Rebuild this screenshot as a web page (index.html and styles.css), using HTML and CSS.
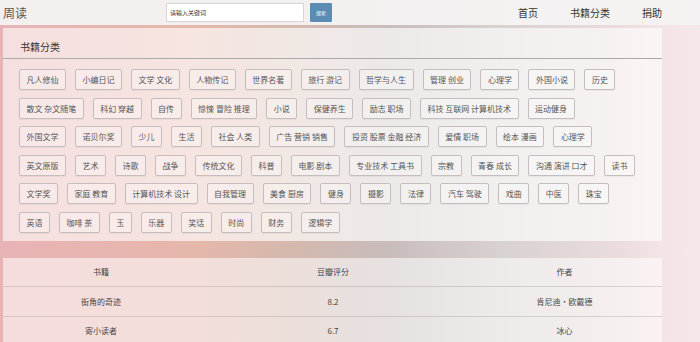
FILE: index.html
```html
<!DOCTYPE html>
<html lang="zh-CN">
<head>
  <meta charset="UTF-8" />
  <title>周读</title>
  <link rel="stylesheet" href="styles.css">
</head>
<body>

<nav class="navbar">
  <div class="nav-inner">
    <a class="brand" href="#">周读</a>
    <form class="search" onsubmit="return false">
      <input type="text" placeholder="请输入关键词" />
      <button type="submit">搜索</button>
    </form>
    <ul class="nav-links">
      <li><a href="#">首页</a></li>
      <li><a href="#">书籍分类</a></li>
      <li><a href="#">捐助</a></li>
    </ul>
  </div>
</nav>

<main class="wrap">
  <section class="panel">
    <div class="panel-title">书籍分类</div>
    <div class="tags" id="tags"></div>
  </section>

  <table class="books">
    <thead>
      <tr><th class="c1">书籍</th><th class="c2">豆瓣评分</th><th class="c3">作者</th></tr>
    </thead>
    <tbody>
      <tr><td>街角的奇迹</td><td>8.2</td><td>肯尼迪·欧戴德</td></tr>
      <tr><td>寄小读者</td><td>6.7</td><td>冰心</td></tr>
    </tbody>
  </table>
</main>

<script>
  const rows = [
    ["凡人修仙", "小编日记", "文学 文化", "人物传记", "世界名著", "旅行 游记", "哲学与人生", "管理 创业", "心理学", "外国小说", "历史"],
    ["散文 杂文随笔", "科幻 穿越", "自传", "惊悚 冒险 推理", "小说", "保健养生", "励志 职场", "科技 互联网 计算机技术", "运动健身"],
    ["外国文学", "诺贝尔奖", "少儿", "生活", "社会 人类", "广告 营销 销售", "投资 股票 金融 经济", "爱情 职场", "绘本 漫画", "心理学"],
    ["英文原版", "艺术", "诗歌", "战争", "传统文化", "科普", "电影 剧本", "专业技术 工具书", "宗教", "青春 成长", "沟通 演讲 口才", "读书"],
    ["文学奖", "家庭 教育", "计算机技术 设计", "自我管理", "美食 厨房", "健身", "摄影", "法律", "汽车 驾驶", "戏曲", "中医", "珠宝"],
    ["英语", "咖啡 茶", "玉", "乐器", "笑话", "时尚", "财务", "逻辑学"]
  ];

  const box = document.getElementById("tags");
  rows.forEach(row => {
    const line = document.createElement("div");
    line.className = "tag-row";
    row.forEach(name => {
      const a = document.createElement("a");
      a.className = "tag";
      a.href = "#";
      a.textContent = name;
      line.appendChild(a);
    });
    box.appendChild(line);
  });
</script>

</body>
</html>
```

FILE: styles.css
```css
body {
  margin: 0;
  font-family: "Noto Sans CJK SC", "Noto Sans", sans-serif;
  color: #444;
  min-height: 100vh;
  background:
    linear-gradient(90deg, #e8b3b5 0%, #e6b7ab 28%, #d6b8ac 40%, #c8bcbb 55%, #d8d2d1 72%, #eadcdc 88%, #f5e4e6 95%, #f6e8ea 100%);
}

a {
  color: inherit;
  text-decoration: none;
}

.navbar {
  height: 25px;
  background: rgba(245, 243, 243, 0.96);
}

.nav-inner {
  width: 659px;
  margin-left: 3px;
  height: 25px;
  display: flex;
  align-items: center;
}

.brand {
  font-size: 12px;
  color: #555;
  width: 24px;
}

.search {
  display: flex;
  align-items: center;
  margin-left: 139px;
}

.search input {
  width: 138px;
  height: 19px;
  box-sizing: border-box;
  border: 1px solid #d6d6d6;
  background: #fff;
  padding: 0 3px;
  font-size: 6px;
  font-family: inherit;
  outline: none;
}

.search input::placeholder {
  color: #333;
}

.search button {
  margin-left: 6px;
  width: 22px;
  height: 19px;
  border: none;
  border-radius: 1px;
  background: #5b8db4;
  color: #fff;
  font-size: 5px;
  font-family: inherit;
  padding: 0;
}

.nav-links {
  list-style: none;
  margin: 0 0 0 auto;
  padding: 0;
  display: flex;
  gap: 32px;
  font-size: 10px;
  color: #333;
}

.wrap {
  width: 659px;
  margin: 3px 0 0 3px;
}

.panel {
  background: linear-gradient(90deg, rgba(255, 255, 255, 0.58), rgba(255, 255, 255, 0.68) 50%, rgba(255, 255, 255, 0.62));
  padding-bottom: 8px;
}

.panel-title {
  padding: 12px 17px 4px;
  font-size: 10px;
  line-height: 14px;
  color: #333;
  border-bottom: 1px solid #aaa;
}

.tags {
  margin: 10px 0 0 16px;
  display: flex;
  flex-direction: column;
  gap: 7.5px;
}

.tag-row {
  display: flex;
  gap: 9px;
}

.tag {
  height: 21px;
  box-sizing: border-box;
  padding: 0 6.5px;
  border: 1px solid #c6bebe;
  border-radius: 2px;
  background: rgba(255, 255, 255, 0.3);
  box-shadow: 0 1px 1px rgba(0, 0, 0, 0.05);
  font-size: 8px;
  line-height: 19px;
  color: #555;
  white-space: nowrap;
}

.books {
  width: 659px;
  margin-top: 17px;
  border-collapse: collapse;
  font-size: 8px;
  color: #444;
}

.books th,
.books td {
  height: 28.5px;
  padding: 0;
  text-align: center;
  font-weight: normal;
  background: rgba(255, 255, 255, 0.55);
  border-bottom: 1px solid rgba(150, 135, 135, 0.3);
}

.books .c1 { width: 196px; }
.books .c2 { width: 268px; }
.books .c3 { width: 195px; }
```
